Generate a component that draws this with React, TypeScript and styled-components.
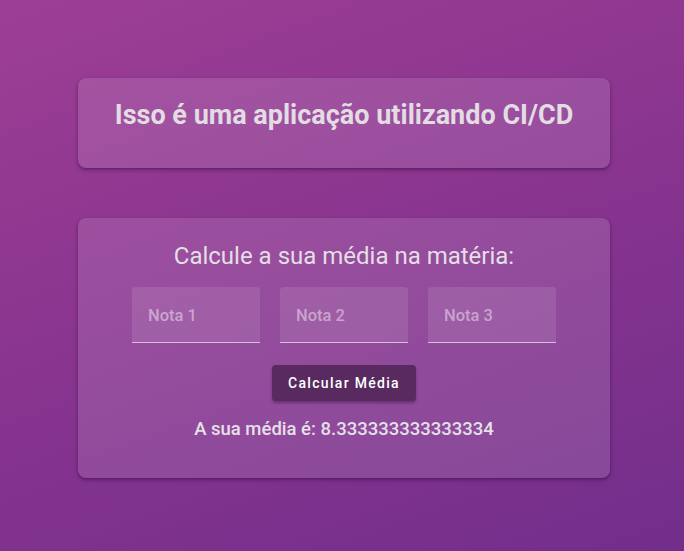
import React from "react";
import styled, { createGlobalStyle } from "styled-components";

const Global = createGlobalStyle`
  html, body { margin: 0; padding: 0; height: 100%; }
  body {
    font-family: Roboto, "Noto Sans", sans-serif;
    background: linear-gradient(160deg, #9d3e94 0%, #8a3590 45%, #722e8b 100%);
    min-height: 551px;
  }
`;

const Page = styled.main`
  display: flex;
  flex-direction: column;
  gap: 50px;
  padding: 78px 74px 0 78px;
  width: 532px;
`;

const Card = styled.section<{ $h: number }>`
  height: ${(p) => p.$h}px;
  box-sizing: border-box;
  border-radius: 8px;
  background: rgba(255, 255, 255, 0.12);
  box-shadow: 0 2px 4px rgba(40, 0, 50, 0.35), 0 1px 2px rgba(40, 0, 50, 0.2);
  display: flex;
  flex-direction: column;
  align-items: center;
`;

const Title = styled.h1`
  margin: 21px 0 0;
  font-size: 27px;
  font-weight: 700;
  color: #e1dde3;
`;

const Subtitle = styled.h2`
  margin: 24px 0 0;
  font-size: 24px;
  font-weight: 400;
  color: #e4dfe6;
`;

const Inputs = styled.div`
  display: flex;
  gap: 20px;
  margin-top: 17px;
`;

const Field = styled.input`
  width: 128px;
  height: 56px;
  box-sizing: border-box;
  border: none;
  border-bottom: 1px solid rgba(255, 255, 255, 0.6);
  border-radius: 4px 4px 0 0;
  background: rgba(255, 255, 255, 0.1);
  padding: 2px 16px 0;
  font-family: inherit;
  font-size: 16.5px;
  font-weight: 500;
  color: #fff;
  outline: none;
  &::placeholder { color: rgba(255, 255, 255, 0.45); }
`;

const Button = styled.button`
  margin-top: 22px;
  width: 144px;
  height: 36px;
  border: none;
  border-radius: 4px;
  background: #582a5f;
  color: #fff;
  font-family: inherit;
  font-size: 14px;
  font-weight: 500;
  letter-spacing: 1.3px;
  box-shadow: 0 2px 3px rgba(30, 0, 40, 0.35);
`;

const Result = styled.p`
  margin: 17px 0 0;
  font-size: 18.5px;
  font-weight: 500;
  color: #e6e1e8;
`;

export default function App() {
  return (
    <>
      <Global />
      <Page>
        <Card $h={90}>
          <Title>Isso é uma aplicação utilizando CI/CD</Title>
        </Card>
        <Card $h={260}>
          <Subtitle>Calcule a sua média na matéria:</Subtitle>
          <Inputs>
            <Field placeholder="Nota 1" />
            <Field placeholder="Nota 2" />
            <Field placeholder="Nota 3" />
          </Inputs>
          <Button>Calcular Média</Button>
          <Result>A sua média é: 8.333333333333334</Result>
        </Card>
      </Page>
    </>
  );
}
